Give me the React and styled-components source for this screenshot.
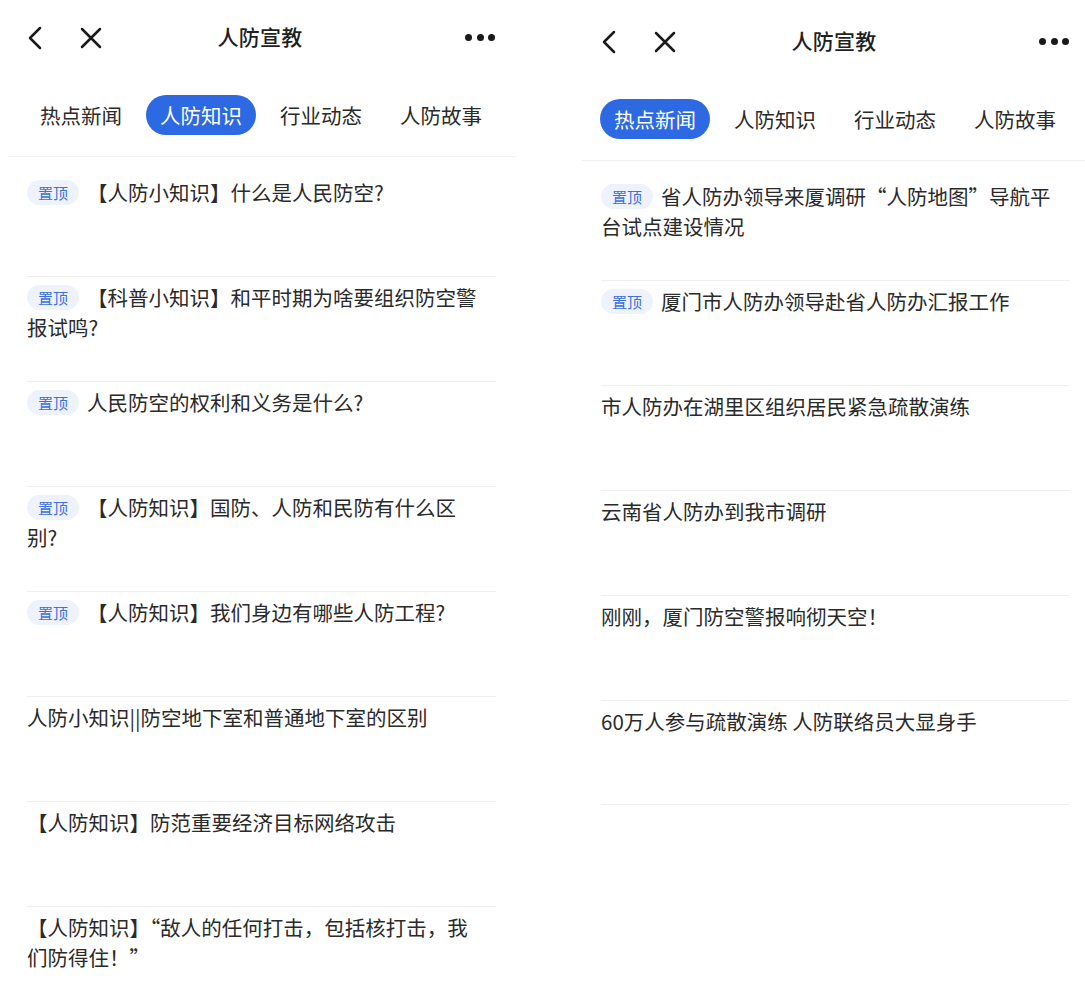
import React from "react";
import styled, { createGlobalStyle } from "styled-components";

const Global = createGlobalStyle`
  html, body { margin: 0; padding: 0; background: #fff; }
  body {
    font-family: "Noto Sans CJK SC", "Noto Sans", sans-serif;
    color: #2a2a2a;
  }
`;

const Stage = styled.div`
  width: 1085px;
  height: 991px;
  overflow: hidden;
  display: flex;
  align-items: flex-start;
  gap: 54px;
`;

const Phone = styled.div`
  width: 520px;
  flex-shrink: 0;
  margin-top: ${(p) => p.$offset || 0}px;
  background: #fff;
`;

const NavBar = styled.div`
  height: 75px;
  display: grid;
  grid-template-columns: 1fr auto 1fr;
  align-items: center;
`;

const NavLeft = styled.div`
  display: flex;
  align-items: center;
  gap: 37px;
  padding-left: 27px;
`;

const NavRight = styled.div`
  display: flex;
  justify-content: flex-end;
  align-items: center;
  gap: 4.5px;
  padding-right: 25px;
`;

const Dot = styled.span`
  width: 7px;
  height: 7px;
  border-radius: 50%;
  background: #1a1a1a;
`;

const Title = styled.div`
  font-size: 21px;
  font-weight: 500;
  color: #1f1f1f;
  letter-spacing: 0.3px;
  margin-top: -3px;
`;

const Tabs = styled.div`
  display: flex;
  gap: 10px;
  padding: 20px 0 21px 26px;
`;

const Tab = styled.div`
  height: 40px;
  padding: 0 14px;
  border-radius: 20px;
  display: flex;
  align-items: center;
  font-size: 20.5px;
  line-height: 1;
  white-space: nowrap;
  color: ${(p) => (p.$active ? "#fff" : "#2a2a2a")};
  background: ${(p) => (p.$active ? "#2e69e4" : "transparent")};
`;

const Separator = styled.div`
  height: 1px;
  background: #f1f1f1;
  margin: 0 4px 0 8px;
`;

const List = styled.div`
  padding-top: 14px;
  margin: 0 24px 0 27px;
`;

const Item = styled.div`
  box-sizing: border-box;
  height: 105px;
  padding: 6px 12px 0 0;
  border-top: 1px solid ${(p) => (p.$first ? "transparent" : "#efefef")};
  &:last-child {
    border-bottom: 1px solid #efefef;
  }
`;

const ItemText = styled.div`
  font-size: 20.5px;
  line-height: 30px;
  color: #2a2a2a;
  margin-top: -1px;
`;

const Tag = styled.span`
  display: inline-block;
  vertical-align: top;
  margin: 3px 8px 0 0;
  height: 25px;
  line-height: 25px;
  padding: 0 11px;
  border-radius: 13px;
  background: #edf2fd;
  color: #3d6fdc;
  font-size: 15px;
`;

const Back = () => (
  <svg width="16" height="24" viewBox="0 0 16 24" fill="none">
    <path d="M13 2 L3 12 L13 22" stroke="#1a1a1a" strokeWidth="2.5" strokeLinecap="round" strokeLinejoin="round" />
  </svg>
);

const Close = () => (
  <svg width="22" height="22" viewBox="0 0 22 22" fill="none">
    <path d="M2 2 L20 20 M20 2 L2 20" stroke="#1a1a1a" strokeWidth="2.5" strokeLinecap="round" />
  </svg>
);

const TAB_NAMES = ["热点新闻", "人防知识", "行业动态", "人防故事"];

const knowledge = [
  { top: true, text: "【人防小知识】什么是人民防空?" },
  { top: true, text: "【科普小知识】和平时期为啥要组织防空警报试鸣?" },
  { top: true, text: "人民防空的权利和义务是什么?" },
  { top: true, text: "【人防知识】国防、人防和民防有什么区别?" },
  { top: true, text: "【人防知识】我们身边有哪些人防工程?" },
  { top: false, text: "人防小知识||防空地下室和普通地下室的区别" },
  { top: false, text: "【人防知识】防范重要经济目标网络攻击" },
  { top: false, text: "【人防知识】“敌人的任何打击，包括核打击，我们防得住！”" },
];

const news = [
  { top: true, text: "省人防办领导来厦调研“人防地图”导航平台试点建设情况" },
  { top: true, text: "厦门市人防办领导赴省人防办汇报工作" },
  { top: false, text: "市人防办在湖里区组织居民紧急疏散演练" },
  { top: false, text: "云南省人防办到我市调研" },
  { top: false, text: "刚刚，厦门防空警报响彻天空！" },
  { top: false, text: "60万人参与疏散演练 人防联络员大显身手" },
];

const Screen = ({ active, items, offset }) => (
  <Phone $offset={offset}>
    <NavBar>
      <NavLeft>
        <Back />
        <Close />
      </NavLeft>
      <Title>人防宣教</Title>
      <NavRight>
        <Dot />
        <Dot />
        <Dot />
      </NavRight>
    </NavBar>
    <Tabs>
      {TAB_NAMES.map((t, i) => (
        <Tab key={t} $active={i === active}>
          {t}
        </Tab>
      ))}
    </Tabs>
    <Separator />
    <List>
      {items.map((it, i) => (
        <Item key={i} $first={i === 0}>
          <ItemText lang="zh-CN">
            {it.top && <Tag>置顶</Tag>}
            {it.text}
          </ItemText>
        </Item>
      ))}
    </List>
  </Phone>
);

export default function App() {
  return (
    <>
      <Global />
      <Stage>
        <Screen active={1} items={knowledge} offset={0} />
        <Screen active={0} items={news} offset={4} />
      </Stage>
    </>
  );
}
